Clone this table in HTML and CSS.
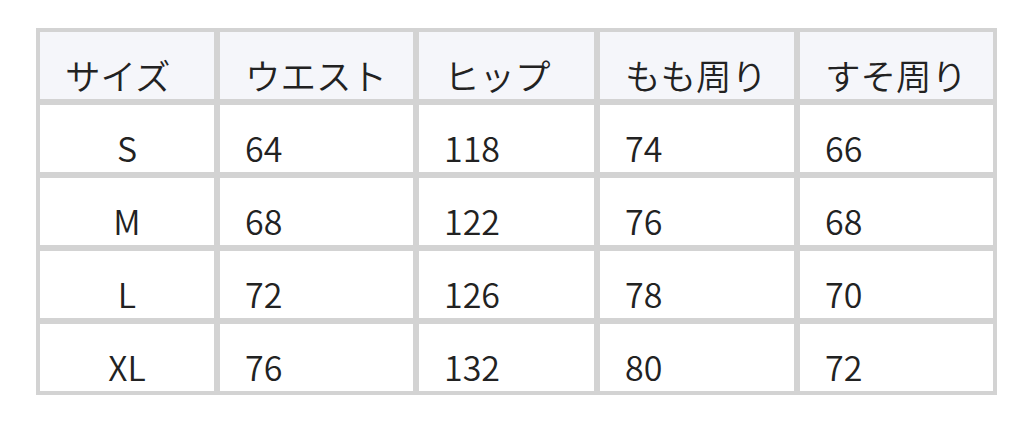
FILE: index.html
```html
<!DOCTYPE html>
<html lang="ja">
<head>
<meta charset="utf-8">
<link rel="stylesheet" href="styles.css">
</head>
<body>
<table class="size-table">
  <colgroup>
    <col class="c1"><col class="c2"><col class="c3"><col class="c4"><col class="c5">
  </colgroup>
  <thead>
    <tr><th>サイズ</th><th>ウエスト</th><th>ヒップ</th><th>もも周り</th><th>すそ周り</th></tr>
  </thead>
  <tbody>
    <tr><td class="first">S</td><td>64</td><td>118</td><td>74</td><td>66</td></tr>
    <tr><td class="first">M</td><td>68</td><td>122</td><td>76</td><td>68</td></tr>
    <tr><td class="first">L</td><td>72</td><td>126</td><td>78</td><td>70</td></tr>
    <tr><td class="first">XL</td><td>76</td><td>132</td><td>80</td><td>72</td></tr>
  </tbody>
</table>
</body>
</html>
```
FILE: styles.css
```css
html, body {
  margin: 0;
  padding: 0;
  background: #ffffff;
}
body {
  padding: 28px 0 0 36px;
  font-family: "Noto Sans CJK JP", "Noto Sans", sans-serif;
  color: #222222;
}
.size-table {
  border-collapse: separate;
  border-spacing: 0;
  border: 1px solid #d3d3d3;
  table-layout: fixed;
  width: 961px;
}
.c1 { width: 180px; }
.c2 { width: 199px; }
.c3 { width: 181px; }
.c4 { width: 200px; }
.c5 { width: 199px; }
.size-table th,
.size-table td {
  border: 3px solid #d3d3d3;
  padding: 18px 0 0 25px;
  line-height: 49px;
  font-size: 34px;
  font-weight: 350;
  text-align: left;
  vertical-align: top;
  white-space: nowrap;
}
.size-table th {
  background: #f5f6fa;
  font-size: 35.5px;
}
.size-table .first {
  text-align: center;
  padding-left: 0;
}
```
